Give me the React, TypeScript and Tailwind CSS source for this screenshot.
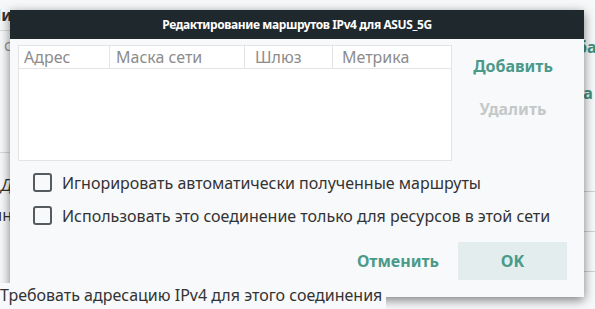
import React from "react";

function Checkbox() {
  return <span className="block w-[19px] h-[19px] rounded-[3px] border-2 border-[#555b5e] bg-transparent shrink-0" />;
}

export default function App() {
  return (
    <div className="relative w-[595px] h-[309px] overflow-hidden bg-[#f7f8f9] text-[#333] [font-family:'Noto_Sans',sans-serif]">
      {/* background page */}
      <div className="flex w-full h-full">
        <div className="flex flex-col w-[12px] overflow-hidden shrink-0">
          <div className="h-[30px] flex items-center justify-end font-bold text-[16px] whitespace-nowrap">Ни</div>
          <div className="h-px bg-[#d8d8d8]" />
          <div className="h-[28px] flex items-center justify-end text-[16px] text-[#999] whitespace-nowrap">с</div>
          <div className="h-[93px]" />
          <div className="h-px bg-[#d8d8d8]" />
          <div className="h-[44px] flex items-end justify-end text-[16px] italic whitespace-nowrap">Д</div>
          <div className="h-[36px] flex items-center justify-end text-[16px] whitespace-nowrap">ин</div>
        </div>
        <div className="flex-1" />
        <div className="flex flex-col w-[22px] overflow-hidden shrink-0 text-[#3f8f80] font-bold text-[16px]">
          <div className="h-[37px]" />
          <div className="h-[20px] whitespace-nowrap leading-[20px] -ml-[6px]">оба</div>
          <div className="h-[26px]" />
          <div className="h-[20px] whitespace-nowrap leading-[20px]">да</div>
          <div className="h-[88px]" />
          <div className="h-px bg-[#d0d0d0]" />
          <div className="h-[39px]" />
          <div className="h-px bg-[#d0d0d0]" />
          <div className="h-[39px]" />
          <div className="h-px bg-[#d0d0d0]" />
        </div>
      </div>

      {/* dialog */}
      <div className="absolute left-[10px] top-[10px] w-[574px] h-[287px] bg-[#f8f9fb] shadow-[0_3px_10px_rgba(0,0,0,0.5)] flex flex-col">
        <div className="h-[29px] bg-[#1f292d] flex items-center justify-center text-white font-bold text-[12px] tracking-[-0.4px] shrink-0">
          Редактирование маршрутов IPv4 для ASUS_5G
        </div>
        <div className="flex pt-[6px] pl-[8px]">
          <div className="w-[434px] h-[116px] bg-white border border-[#e2e4e6] flex flex-col">
            <div className="flex h-[23px] border-b border-[#e2e4e6] text-[16px] text-[#8c8c8c] leading-[22px]">
              <div className="w-[91px] pl-[5px] border-r border-[#e2e4e6]">Адрес</div>
              <div className="w-[135px] pl-[6px] border-r border-[#e2e4e6]">Маска сети</div>
              <div className="w-[88px] pl-[10px] border-r border-[#e2e4e6]">Шлюз</div>
              <div className="flex-1 pl-[9px]">Метрика</div>
            </div>
          </div>
          <div className="flex flex-col items-center w-[122px] pt-[9px] font-bold text-[16px]">
            <div className="h-[24px] leading-[24px] text-[#4a9a8a]">Добавить</div>
            <div className="h-[19px]" />
            <div className="h-[24px] leading-[24px] text-[#c4c8c9]">Удалить</div>
          </div>
        </div>
        <div className="flex flex-col pl-[23px] pt-[12px] gap-[14px] text-[16px] text-[#333]">
          <div className="flex items-center gap-[10px] h-[19px]">
            <Checkbox />
            <span>Игнорировать автоматически полученные маршруты</span>
          </div>
          <div className="flex items-center gap-[10px] h-[19px]">
            <Checkbox />
            <span>Использовать это соединение только для ресурсов в этой сети</span>
          </div>
        </div>
        <div className="flex justify-end items-center pt-[17px] pr-[17px] font-bold text-[16px]">
          <div className="h-[38px] px-[14px] flex items-center text-[#4a9a8a] mr-[5px]">Отменить</div>
          <div className="w-[109px] h-[38px] bg-[#e3eded] flex items-center justify-center text-[#4a9a8a]">OK</div>
        </div>
      </div>

      <div className="absolute z-10 left-0 top-[283px] h-[26px] pr-[4px] bg-[#f8f9fb] text-[16px] text-[#333] whitespace-nowrap leading-[24px]">
        Требовать адресацию IPv4 для этого соединения
      </div>
    </div>
  );
}
